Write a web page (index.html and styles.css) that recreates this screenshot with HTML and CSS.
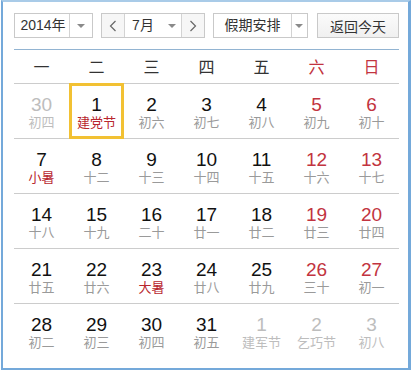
FILE: index.html
```html
<!DOCTYPE html>
<html lang="zh-CN">
<head>
    <meta charset="UTF-8">
    <title>万年历</title>
    <link rel="stylesheet" href="styles.css">
</head>
<body>
    <div class="calendar">
        <div class="toolbar">
            <div class="select year-select">
                <span class="select-text">2014年</span>
                <span class="select-arrow"></span>
            </div>
            <div class="month-group">
                <span class="nav-btn">
                    <svg width="8" height="12" viewBox="0 0 8 12"><path d="M6.5 1 L1.5 6 L6.5 11" fill="none" stroke="#666" stroke-width="1.2"/></svg>
                </span>
                <div class="select month-select">
                    <span class="select-text">7月</span>
                    <span class="select-arrow"></span>
                </div>
                <span class="nav-btn">
                    <svg width="8" height="12" viewBox="0 0 8 12"><path d="M1.5 1 L6.5 6 L1.5 11" fill="none" stroke="#666" stroke-width="1.2"/></svg>
                </span>
            </div>
            <div class="select holiday-select">
                <span class="select-text">假期安排</span>
                <span class="select-arrow"></span>
            </div>
            <button class="today-btn">返回今天</button>
        </div>

        <div class="weekdays">
            <span>一</span><span>二</span><span>三</span><span>四</span><span>五</span>
            <span class="weekend">六</span><span class="weekend">日</span>
        </div>

        <div class="weeks">
            <div class="week">
                <div class="day other"><b>30</b><i>初四</i></div>
                <div class="day today"><b>1</b><i class="fest">建党节</i></div>
                <div class="day"><b>2</b><i>初六</i></div>
                <div class="day"><b>3</b><i>初七</i></div>
                <div class="day"><b>4</b><i>初八</i></div>
                <div class="day weekend"><b>5</b><i>初九</i></div>
                <div class="day weekend"><b>6</b><i>初十</i></div>
            </div>
            <div class="week">
                <div class="day"><b>7</b><i class="fest">小暑</i></div>
                <div class="day"><b>8</b><i>十二</i></div>
                <div class="day"><b>9</b><i>十三</i></div>
                <div class="day"><b>10</b><i>十四</i></div>
                <div class="day"><b>11</b><i>十五</i></div>
                <div class="day weekend"><b>12</b><i>十六</i></div>
                <div class="day weekend"><b>13</b><i>十七</i></div>
            </div>
            <div class="week">
                <div class="day"><b>14</b><i>十八</i></div>
                <div class="day"><b>15</b><i>十九</i></div>
                <div class="day"><b>16</b><i>二十</i></div>
                <div class="day"><b>17</b><i>廿一</i></div>
                <div class="day"><b>18</b><i>廿二</i></div>
                <div class="day weekend"><b>19</b><i>廿三</i></div>
                <div class="day weekend"><b>20</b><i>廿四</i></div>
            </div>
            <div class="week">
                <div class="day"><b>21</b><i>廿五</i></div>
                <div class="day"><b>22</b><i>廿六</i></div>
                <div class="day"><b>23</b><i class="fest">大暑</i></div>
                <div class="day"><b>24</b><i>廿八</i></div>
                <div class="day"><b>25</b><i>廿九</i></div>
                <div class="day weekend"><b>26</b><i>三十</i></div>
                <div class="day weekend"><b>27</b><i>初一</i></div>
            </div>
            <div class="week">
                <div class="day"><b>28</b><i>初二</i></div>
                <div class="day"><b>29</b><i>初三</i></div>
                <div class="day"><b>30</b><i>初四</i></div>
                <div class="day"><b>31</b><i>初五</i></div>
                <div class="day other"><b>1</b><i>建军节</i></div>
                <div class="day other"><b>2</b><i>乞巧节</i></div>
                <div class="day other"><b>3</b><i>初八</i></div>
            </div>
        </div>
    </div>
</body>
</html>
```

FILE: styles.css
```css
body {
    margin: 0;
    background: #fff;
    font-family: "Liberation Sans", "Noto Sans CJK SC", sans-serif;
    color: #222;
}

.calendar {
    width: 410px;
    height: 370px;
    margin-left: 1px;
    box-sizing: border-box;
    border: 2px solid #74a9da;
    border-top-color: #a9cbe8;
    border-right-width: 3px;
    padding: 11px 9px 0 11px;
    background: #fff;
}

.toolbar {
    display: flex;
    height: 25px;
    gap: 8px;
    font-size: 14px;
    color: #333;
}

.select {
    display: flex;
    align-items: center;
    box-sizing: border-box;
    height: 25px;
    border: 1px solid #c9c9c9;
    background: #fff;
}

.select-text {
    flex: 1;
    text-align: center;
    line-height: 23px;
}

.select-arrow {
    width: 22px;
    height: 23px;
    border-left: 1px solid #d3d3d3;
    position: relative;
}

.select-arrow::after {
    content: "";
    position: absolute;
    left: 7px;
    top: 10px;
    border-left: 4px solid transparent;
    border-right: 4px solid transparent;
    border-top: 4px solid #8a8a8a;
}

.year-select {
    width: 79px;
}

.year-select .select-text {
    padding-left: 2px;
}

.month-group {
    display: flex;
    width: 104px;
    height: 25px;
    box-sizing: border-box;
    border: 1px solid #c9c9c9;
}

.nav-btn {
    width: 22px;
    display: flex;
    align-items: center;
    justify-content: center;
    background: #f6f6f6;
}

.month-select {
    width: 60px;
    height: 23px;
    border-top: 0;
    border-bottom: 0;
    border-color: #d3d3d3;
}

.month-select .select-arrow {
    border-left: 0;
    width: 20px;
}

.holiday-select {
    width: 95px;
    margin-left: 0;
}

.holiday-select .select-arrow {
    width: 15px;
}

.holiday-select .select-arrow::after {
    left: 3px;
}

.today-btn {
    width: 82px;
    height: 25px;
    margin-left: 1px;
    border: 1px solid #c9c9c9;
    background: linear-gradient(#fbfbfb, #f0f0f0);
    font-family: "Liberation Sans", "Noto Sans CJK SC", sans-serif;
    font-size: 14px;
    color: #333;
    padding: 0;
}

.weekdays {
    display: grid;
    grid-template-columns: repeat(7, 55px);
    margin-top: 11px;
    border-top: 1px solid #92b4d2;
    border-bottom: 1px solid #cccccc;
    height: 33px;
    box-sizing: content-box;
    font-size: 16px;
    color: #333;
}

.weekdays span {
    text-align: center;
    padding-top: 3px;
    line-height: 30px;
}

.weekdays .weekend {
    color: #c23440;
}

.week {
    display: grid;
    grid-template-columns: repeat(7, 55px);
    height: 54px;
    border-bottom: 1px solid #cccccc;
}

.week:last-child {
    border-bottom: 0;
}

.day {
    display: flex;
    flex-direction: column;
    align-items: center;
    padding-top: 11px;
    box-sizing: border-box;
}

.day b {
    font-weight: normal;
    font-size: 19px;
    line-height: 20px;
    color: #111;
}

.day i {
    font-style: normal;
    font-size: 13px;
    line-height: 16px;
    color: #9a9a9a;
}

.day.weekend b {
    color: #c23440;
}

.day i.fest {
    color: #b8262e;
}

.day.other b,
.day.other i {
    color: #bdbdbd;
}

.day.today {
    margin-top: -1px;
    height: 56px;
    padding-top: 12px;
    border: 3px solid #f2c133;
    padding-top: 9px;
}
```
